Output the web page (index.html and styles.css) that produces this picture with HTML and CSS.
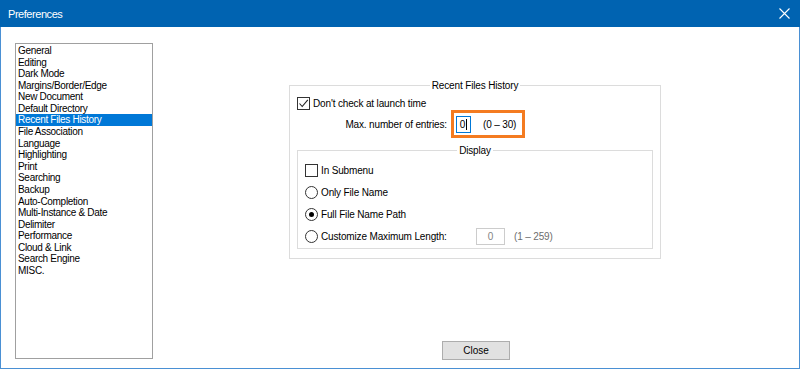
FILE: index.html
```html
<!DOCTYPE html>
<html lang="en">
<head>
    <meta charset="UTF-8">
    <title>Preferences</title>
    <link rel="stylesheet" href="styles.css">
</head>
<body>
    <div class="window">
        <div class="titlebar">
            <span class="title">Preferences</span>
            <svg class="close-x" width="11" height="11" viewBox="0 0 11 11">
                <path d="M0.5 0.5 L10.5 10.5 M10.5 0.5 L0.5 10.5" stroke="#fff" stroke-width="1.1" fill="none"/>
            </svg>
        </div>

        <div class="main">
            <ul class="pages">
                <li>General</li>
                <li>Editing</li>
                <li>Dark Mode</li>
                <li>Margins/Border/Edge</li>
                <li>New Document</li>
                <li>Default Directory</li>
                <li class="selected">Recent Files History</li>
                <li>File Association</li>
                <li>Language</li>
                <li>Highlighting</li>
                <li>Print</li>
                <li>Searching</li>
                <li>Backup</li>
                <li>Auto-Completion</li>
                <li>Multi-Instance &amp; Date</li>
                <li>Delimiter</li>
                <li>Performance</li>
                <li>Cloud &amp; Link</li>
                <li>Search Engine</li>
                <li>MISC.</li>
            </ul>

            <div class="pane">
                <fieldset class="group outer">
                    <legend>Recent Files History</legend>

                    <div class="row check-row">
                        <span class="checkbox checked">
                            <svg width="11" height="11" viewBox="0 0 11 11">
                                <path d="M1.5 5.5 L4.2 8.5 L9.8 1.8" stroke="#222" stroke-width="1.1" fill="none"/>
                            </svg>
                        </span>
                        <span class="label">Don't check at launch time</span>
                    </div>

                    <div class="row entries-row">
                        <span class="entries-label">Max. number of entries:</span>
                        <span class="highlight">
                            <span class="spin active">0<i class="caret"></i></span>
                            <span class="range">(0 – 30)</span>
                        </span>
                    </div>

                    <fieldset class="group inner">
                        <legend>Display</legend>

                        <div class="row option">
                            <span class="checkbox"></span>
                            <span class="label">In Submenu</span>
                        </div>
                        <div class="row option">
                            <span class="radio"></span>
                            <span class="label">Only File Name</span>
                        </div>
                        <div class="row option">
                            <span class="radio on"></span>
                            <span class="label">Full File Name Path</span>
                        </div>
                        <div class="row option">
                            <span class="radio"></span>
                            <span class="label wide">Customize Maximum Length:</span>
                            <span class="spin disabled">0</span>
                            <span class="range muted">(1 – 259)</span>
                        </div>
                    </fieldset>
                </fieldset>

                <button class="close-btn">Close</button>
            </div>
        </div>
    </div>
</body>
</html>
```

FILE: styles.css
```css
body {
    margin: 0;
    font-family: 'Liberation Sans', Arial, sans-serif;
    font-size: 10px;
    color: #000;
    background: #fff;
}

.window {
    width: 800px;
    height: 369px;
    box-sizing: border-box;
    border: 1px solid #4a90d4;
    border-top: none;
    display: flex;
    flex-direction: column;
    background: #fff;
}

.titlebar {
    height: 27px;
    margin: 0 -1px;
    background: #0063b1;
    color: #fff;
    display: flex;
    align-items: center;
    justify-content: space-between;
    padding: 0 10px 0 8px;
}

.title {
    font-size: 11px;
    letter-spacing: -0.45px;
}

.close-x {
    display: block;
    margin-top: -1px;
}

.main {
    flex: 1;
    display: flex;
}

/* left page list */
.pages {
    list-style: none;
    margin: 16px 0 0 14px;
    padding: 1px 0 0;
    width: 138px;
    height: 316px;
    box-sizing: border-box;
    border: 1px solid #a0a0a0;
    letter-spacing: -0.3px;
}

.pages li {
    line-height: 11.58px;
    padding: 0 2px;
    white-space: nowrap;
}

.pages li.selected {
    background: #0078d7;
    color: #fff;
}

/* right side */
.pane {
    flex: 1;
    display: flex;
    flex-direction: column;
    align-items: center;
    padding-top: 52px;
    letter-spacing: -0.15px;
}

.group {
    margin: 0;
    border: 1px solid #dcdcdc;
    min-width: 0;
    padding: 0 7px 9px;
}

.group legend {
    margin: 0 auto;
    padding: 0 2px;
    line-height: 13px;
}

.outer {
    width: 372px;
    margin-right: 2px;
    box-sizing: border-box;
}

.inner {
    margin-top: 6px;
    padding: 2px 7px 1px;
}

.row {
    display: flex;
    align-items: center;
}

.check-row {
    margin-top: 5px;
    height: 13px;
}

.label {
    margin-left: 3px;
    white-space: nowrap;
}

.label.wide {
    width: 155px;
}

.checkbox {
    width: 13px;
    height: 13px;
    box-sizing: border-box;
    border: 1px solid #333;
    background: #fff;
    display: flex;
    align-items: center;
    justify-content: center;
}

.checkbox svg {
    display: block;
}

.radio {
    width: 13px;
    height: 13px;
    box-sizing: border-box;
    border: 1px solid #333;
    border-radius: 50%;
    background: #fff;
    display: flex;
    align-items: center;
    justify-content: center;
}

.radio.on::after {
    content: '';
    width: 5px;
    height: 5px;
    border-radius: 50%;
    background: #000;
}

.entries-row {
    height: 28px;
}

.entries-label {
    width: 150px;
    text-align: right;
    margin-right: 4px;
    white-space: nowrap;
}

.highlight {
    display: flex;
    align-items: center;
    width: 74px;
    height: 28px;
    box-sizing: border-box;
    border: 3px solid #f47b20;
    padding-left: 2px;
}

.spin {
    height: 17px;
    box-sizing: border-box;
    display: flex;
    align-items: center;
    justify-content: center;
    background: #fff;
}

.spin.active {
    width: 15px;
    border: 1px solid #0078d7;
}

.caret {
    display: block;
    width: 1px;
    height: 11px;
    background: #000;
    margin-left: 1px;
}

.spin.disabled {
    width: 29px;
    border: 1px solid #cccccc;
    color: #838383;
}

.range {
    margin-left: 12px;
    white-space: nowrap;
}

.range.muted {
    margin-left: 9px;
    color: #6d6d6d;
}

.option {
    height: 22px;
}

.close-btn {
    margin-top: auto;
    margin-bottom: 8px;
    width: 68px;
    height: 19px;
    padding: 0;
    border: 1px solid #adadad;
    background: #e1e1e1;
    font-family: 'Liberation Sans', Arial, sans-serif;
    font-size: 10px;
    color: #000;
}
```
